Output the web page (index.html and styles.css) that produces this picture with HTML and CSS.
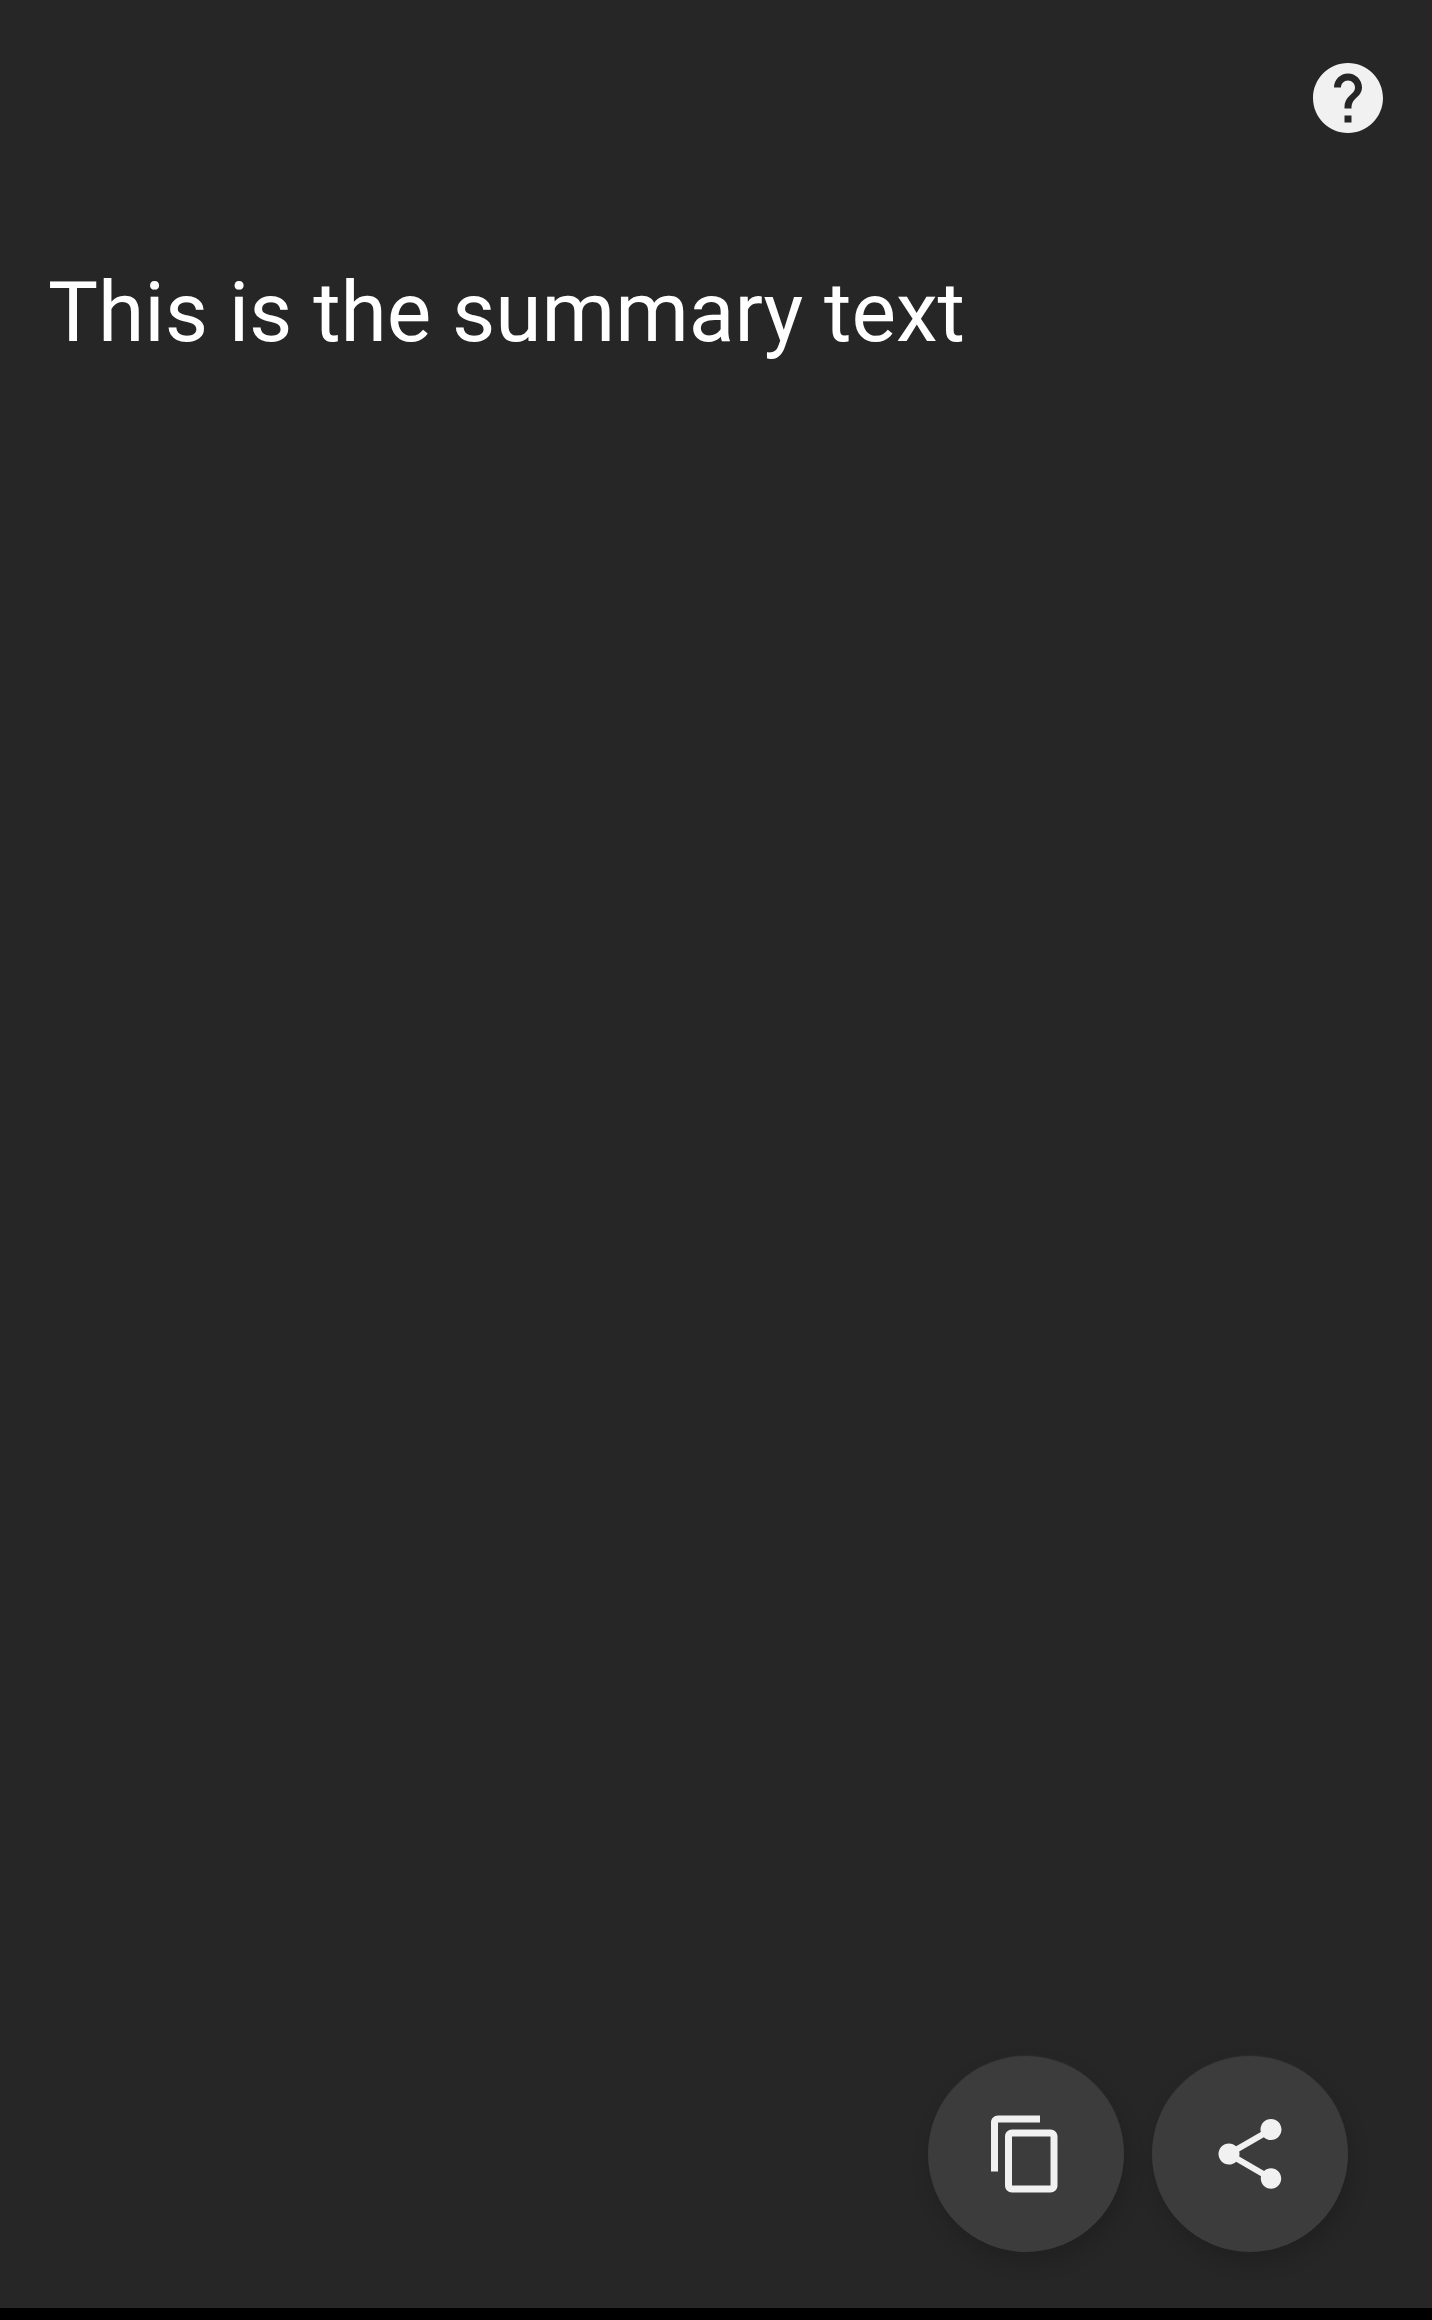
FILE: index.html
```html
<!DOCTYPE html>
<html lang="en">
<head>
<meta charset="utf-8">
<title>Summary</title>
<link rel="stylesheet" href="styles.css">
</head>
<body>
<main class="screen">
  <header class="top-bar">
    <button class="icon-button" aria-label="Help">
      <svg class="icon" viewBox="0 0 24 24"><path d="M12 2C6.48 2 2 6.48 2 12s4.48 10 10 10 10-4.48 10-10S17.52 2 12 2zm1 17h-2v-2h2v2zm2.07-7.75l-.9.92C13.45 12.9 13 13.5 13 15h-2v-.5c0-1.1.45-2.1 1.17-2.83l1.24-1.26c.37-.36.59-.86.59-1.41 0-1.1-.9-2-2-2s-2 .9-2 2H8c0-2.21 1.79-4 4-4s4 1.79 4 4c0 .88-.36 1.68-.93 2.25z"/></svg>
    </button>
  </header>
  <p class="summary">This is the summary text</p>
  <div class="actions">
    <button class="fab" aria-label="Copy">
      <svg class="icon" viewBox="0 0 24 24"><path d="M16 1H4c-1.1 0-2 .9-2 2v14h2V3h12V1zm3 4H8c-1.1 0-2 .9-2 2v14c0 1.1.9 2 2 2h11c1.1 0 2-.9 2-2V7c0-1.1-.9-2-2-2zm0 16H8V7h11v14z"/></svg>
    </button>
    <button class="fab" aria-label="Share">
      <svg class="icon" viewBox="0 0 24 24"><path d="M18 16.08c-.76 0-1.44.3-1.96.77L8.91 12.7c.05-.23.09-.46.09-.7s-.04-.47-.09-.7l7.05-4.11c.54.5 1.25.81 2.04.81 1.66 0 3-1.34 3-3s-1.34-3-3-3-3 1.34-3 3c0 .24.04.47.09.7L8.04 9.81C7.5 9.31 6.79 9 6 9c-1.66 0-3 1.34-3 3s1.34 3 3 3c.79 0 1.5-.31 2.04-.81l7.12 4.16c-.05.21-.08.43-.08.65 0 1.61 1.31 2.92 2.92 2.92 1.61 0 2.92-1.31 2.92-2.92s-1.31-2.92-2.92-2.92z"/></svg>
    </button>
  </div>
</main>
<div class="nav-strip"></div>
</body>
</html>
```

FILE: styles.css
```css
* {
  box-sizing: border-box;
}

html,
body {
  margin: 0;
  height: 100%;
}

body {
  display: flex;
  flex-direction: column;
  height: 2320px;
  background: #000;
  font-family: Roboto, "Liberation Sans", sans-serif;
}

.screen {
  flex: 1;
  display: flex;
  flex-direction: column;
  background: #262626;
}

.nav-strip {
  height: 12px;
  background: #000;
}

.top-bar {
  display: flex;
  justify-content: flex-end;
  padding: 56px 42px 0 0;
}

.icon-button {
  display: flex;
  padding: 0;
  border: 0;
  background: none;
}

.icon {
  display: block;
  width: 84px;
  height: 84px;
  fill: #f1f1f1;
}

.summary {
  flex: 1;
  margin: 0;
  padding: 124px 48px 0;
  color: #fff;
  font-size: 84px;
  font-weight: 400;
  line-height: 98px;
  letter-spacing: -0.06px;
}

.actions {
  display: flex;
  justify-content: flex-end;
  gap: 28px;
  padding: 0 84px 56px 0;
}

.fab {
  display: flex;
  align-items: center;
  justify-content: center;
  width: 196px;
  height: 196px;
  padding: 0;
  border: 0;
  border-radius: 50%;
  background: #3c3c3c;
  box-shadow: 3px 10px 20px rgba(0, 0, 0, 0.16), 0 -1px 1px rgba(255, 255, 255, 0.04);
}
```
